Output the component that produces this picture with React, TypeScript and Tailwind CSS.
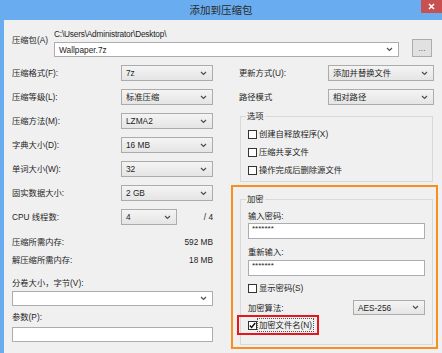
import type { ReactNode } from 'react'

const Chevron = () => (
  <svg width="7" height="5" viewBox="0 0 7 5" className="shrink-0">
    <path d="M1 1l2.5 2.5L6 1" fill="none" stroke="#505050" strokeWidth="1.2" />
  </svg>
)

function Select({ value, className = '', editable = false }: { value?: string; className?: string; editable?: boolean }) {
  return (
    <div
      className={`flex items-center justify-between border pl-[4px] pr-[5px] ${
        editable ? 'bg-white border-[#abadb3]' : 'bg-linear-to-b from-[#f4f4f4] to-[#e5e5e5] border-[#acacac]'
      } ${className}`}
    >
      <span className="leading-[12px]">{value}</span>
      <Chevron />
    </div>
  )
}

function Check({ label, checked = false, focus = false }: { label: string; checked?: boolean; focus?: boolean }) {
  return (
    <div className="flex items-center">
      <span className="w-[9px] h-[9px] border border-[#333] bg-white flex items-center justify-center shrink-0">
        {checked && (
          <svg width="7" height="7" viewBox="0 0 7 7">
            <path d="M0.8 3.6l1.8 1.9L6.2 1" fill="none" stroke="#111" strokeWidth="1.4" />
          </svg>
        )}
      </span>
      <span className={`ml-[1px] px-[1px] leading-[12px] ${focus ? 'outline outline-1 outline-dotted outline-[#555]' : ''}`}>
        {label}
      </span>
    </div>
  )
}

function Group({ title, children, className = '' }: { title: string; children: ReactNode; className?: string }) {
  return (
    <fieldset className={`border border-[#d9d9d9] pl-[5px] pr-[7px] ${className}`}>
      <legend className="px-[1px] leading-[12px]">{title}</legend>
      <div className="pl-[2px]">{children}</div>
    </fieldset>
  )
}

function Row({ label, children }: { label: string; children: ReactNode }) {
  return (
    <div className="h-[16px] flex items-center justify-between">
      <span className="leading-[12px]">{label}</span>
      {children}
    </div>
  )
}

export default function App() {
  return (
    <div className="w-[442px] h-[353px] bg-[#69adf0] flex flex-col overflow-hidden text-[8.3px] text-[#1e1e1e] font-['Liberation_Sans','Noto_Sans_CJK_SC',sans-serif]">
      {/* title bar */}
      <div className="h-[20px] flex items-start shrink-0">
        <div className="w-[21px]" />
        <div className="flex-1 text-center text-[10.5px] leading-[20px] text-[#2b2b2b] font-['Noto_Sans_CJK_SC',sans-serif]">添加到压缩包</div>
        <div className="w-[21px] h-[13px] bg-[#c75050] flex items-center justify-center">
          <svg width="7" height="7" viewBox="0 0 7 7">
            <path d="M1 1l5 5M6 1L1 6" stroke="#fff" strokeWidth="1.5" />
          </svg>
        </div>
      </div>

      <div className="flex-1 ml-[4px] bg-[#f0f0f0] pl-[8px] pr-[8px] pt-[8px]">
        {/* archive row */}
        <div className="flex items-start">
          <span className="w-[42px] mt-[6px] leading-[12px]">压缩包(A)</span>
          <div className="flex-1 flex flex-col">
            <span className="leading-[12px] tracking-[-0.2px]">C:\Users\Administrator\Desktop\</span>
            <Select editable value="Wallpaper.7z" className="mt-[2px] h-[15px]" />
          </div>
          <div className="ml-[13px] mr-[2px] mt-[11px] w-[20px] h-[18px] border border-[#adadad] bg-[#e1e1e1] flex items-center justify-center text-[#666] leading-none">
            ...
          </div>
        </div>

        <div className="mt-[8px] flex">
          {/* left column */}
          <div className="w-[201px] flex flex-col">
            <div className="flex flex-col gap-[8px]">
              <Row label="压缩格式(F):"><Select value="7z" className="w-[92px] h-[16px]" /></Row>
              <Row label="压缩等级(L):"><Select value="标准压缩" className="w-[92px] h-[16px]" /></Row>
              <Row label="压缩方法(M):"><Select value="LZMA2" className="w-[92px] h-[16px]" /></Row>
              <Row label="字典大小(D):"><Select value="16 MB" className="w-[92px] h-[16px]" /></Row>
              <Row label="单词大小(W):"><Select value="32" className="w-[92px] h-[16px]" /></Row>
              <Row label="固实数据大小:"><Select value="2 GB" className="w-[92px] h-[16px]" /></Row>
              <div className="h-[16px] flex items-center">
                <span className="w-[109px] leading-[12px]">CPU 线程数:</span>
                <Select value="4" className="w-[56px] h-[16px]" />
                <span className="flex-1 text-right leading-[12px]">/ 4</span>
              </div>
            </div>
            <div className="mt-[8px]">
              <div className="h-[18px] flex items-center justify-between">
                <span>压缩所需内存:</span>
                <span>592 MB</span>
              </div>
              <div className="h-[18px] flex items-center justify-between">
                <span>解压缩所需内存:</span>
                <span>18 MB</span>
              </div>
            </div>
            <span className="mt-[8px] leading-[12px]">分卷大小，字节(V):</span>
            <Select editable className="mt-[2px] h-[15px]" />
            <span className="mt-[5px] leading-[12px]">参数(P):</span>
            <div className="mt-[4px] h-[15px] bg-white border border-[#abadb3]" />
          </div>

          {/* right column */}
          <div className="ml-[26px] flex-1 flex flex-col">
            <div className="flex flex-col gap-[8px]">
              <Row label="更新方式(U):"><Select value="添加并替换文件" className="w-[106px] h-[16px]" /></Row>
              <Row label="路径模式"><Select value="相对路径" className="w-[106px] h-[16px]" /></Row>
            </div>

            <Group title="选项" className="mt-[5px] mx-[1px] pb-[2px]">
              <div className="pt-[3px] flex flex-col">
                <div className="h-[18px] flex items-center"><Check label="创建自释放程序(X)" /></div>
                <div className="h-[18px] flex items-center"><Check label="压缩共享文件" /></div>
                <div className="h-[18px] flex items-center"><Check label="操作完成后删除源文件" /></div>
              </div>
            </Group>

            {/* highlighted encryption area */}
            <div className="mt-[3px] -ml-[8px] -mr-[4px] border-2 border-[#f7901e] pl-[7px] pr-[3px] pt-[6px] pb-[2px]">
              <Group title="加密" className="pb-[9px]">
                <div className="flex flex-col">
                  <span className="mt-[5px] leading-[12px]">输入密码:</span>
                  <div className="mt-[1px] h-[16px] bg-white border border-[#abadb3] pl-[3px] text-[8px] leading-[10px]">*******</div>
                  <span className="mt-[7px] leading-[12px]">重新输入:</span>
                  <div className="mt-[2px] h-[16px] bg-white border border-[#abadb3] pl-[3px] text-[8px] leading-[10px]">*******</div>
                  <div className="mt-[6px] h-[12px] flex items-center"><Check label="显示密码(S)" /></div>
                  <div className="mt-[6px] h-[15px] flex items-center justify-between">
                    <span className="leading-[12px]">加密算法:</span>
                    <Select value="AES-256" className="w-[72px] h-[15px]" />
                  </div>
                  <div className="-ml-[11px] w-[82px] h-[20px] border-2 border-[#e5161c] pl-[9px] flex items-center">
                    <Check label="加密文件名(N)" checked focus />
                  </div>
                </div>
              </Group>
            </div>
          </div>
        </div>
      </div>
    </div>
  )
}
